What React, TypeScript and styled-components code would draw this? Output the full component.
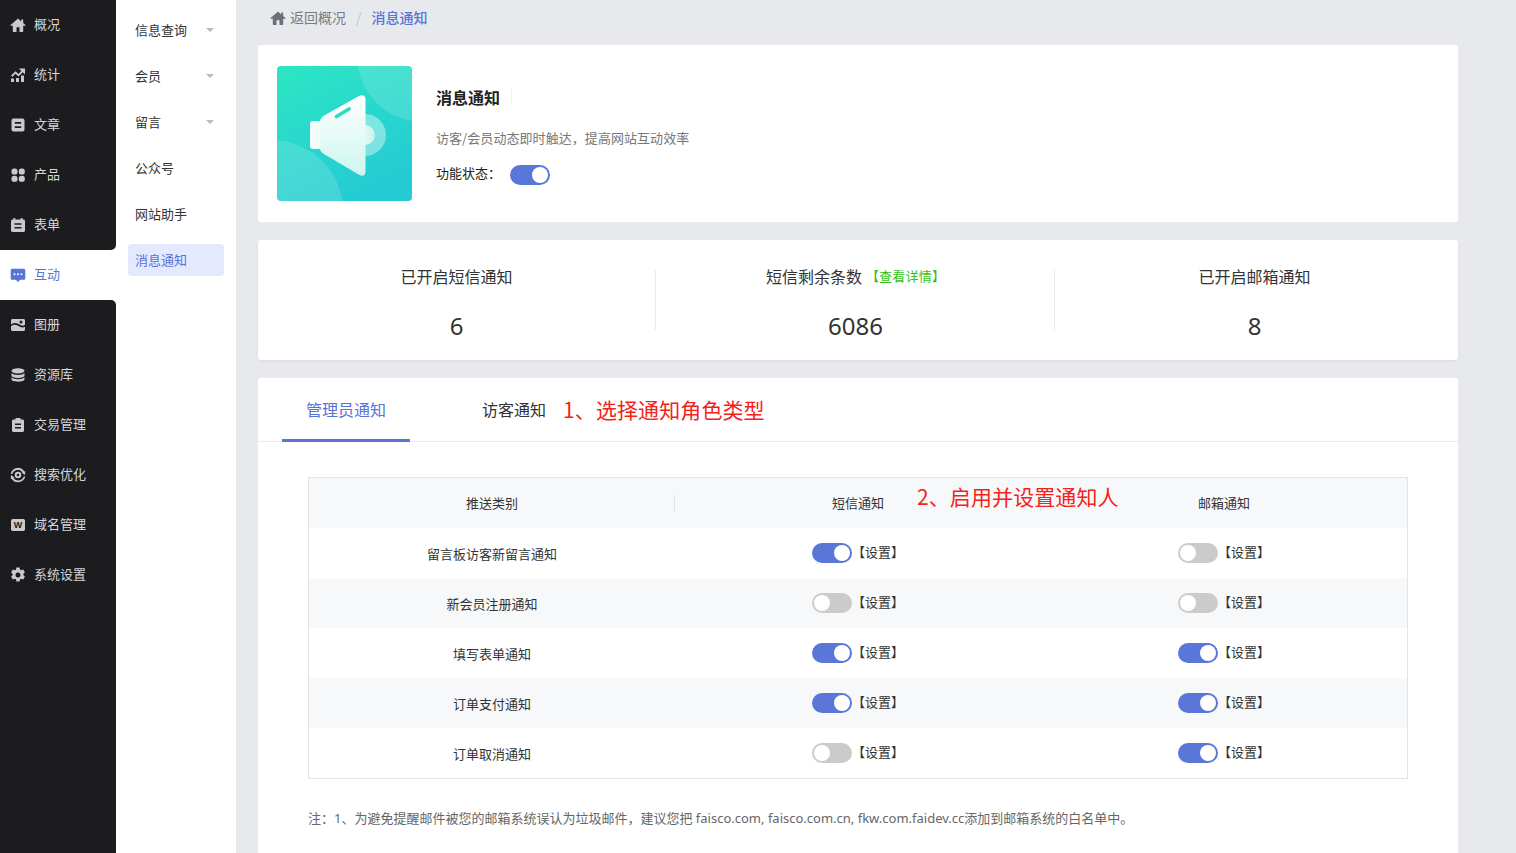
import React from "react";
import styled, { createGlobalStyle } from "styled-components";

const Global = createGlobalStyle`
  html, body { margin: 0; padding: 0; height: 100%; overflow: hidden; }
  body { font-family: "Noto Sans CJK SC", "Noto Sans", sans-serif; font-size: 13px; color: #333; }
  * { box-sizing: border-box; }
`;

const Page = styled.div`
  display: flex;
  width: 1516px;
  height: 853px;
  overflow: hidden;
  background: #e8e9ed;
`;
const Rail = styled.nav`
  width: 116px;
  flex: none;
  height: 100%;
  display: flex;
  flex-direction: column;
  background: #fff;
`;
const RailGroup = styled.div<{ $bottom?: boolean }>`
  background: #1c1c1f;
  flex: ${(p) => (p.$bottom ? 1 : "none")};
  border-radius: ${(p) => (p.$bottom ? "0 5px 0 0" : "0 0 5px 0")};
`;
const RailItem = styled.a<{ $active?: boolean }>`
  display: flex;
  align-items: center;
  gap: 8px;
  height: 50px;
  padding-left: 10px;
  font-size: 13px;
  color: ${(p) => (p.$active ? "#5874d8" : "#d6d6db")};
  svg { width: 16px; height: 16px; flex: none; fill: ${(p) => (p.$active ? "#5874d8" : "#c9c9d0")}; }
`;
const RailLabel = styled.span`
  padding-bottom: 3px;
`;
const SubNav = styled.aside`
  width: 120px;
  flex: none;
  height: 100%;
  background: #fff;
  padding: 14px 12px 0;
  display: flex;
  flex-direction: column;
  gap: 14px;
`;
const SubItem = styled.a<{ $active?: boolean }>`
  display: flex;
  align-items: center;
  justify-content: space-between;
  height: 32px;
  padding: 0 10px 2px 7px;
  border-radius: 4px;
  font-size: 13px;
  color: ${(p) => (p.$active ? "#5874d8" : "#333")};
  background: ${(p) => (p.$active ? "#e4e9fd" : "transparent")};
`;
const Caret = styled.i`
  width: 0;
  height: 0;
  border-left: 4px solid transparent;
  border-right: 4px solid transparent;
  border-top: 4px solid #b9bcc6;
  margin-top: 2px;
`;
const Main = styled.main`
  flex: none;
  width: 1222px;
  padding: 0 0 0 22px;
  display: flex;
  flex-direction: column;
  gap: 18px;
`;
const Crumbs = styled.div`
  height: 27px;
  margin-top: 4px;
  margin-bottom: -4px;
  padding: 0 0 2px 12px;
  display: flex;
  align-items: center;
  font-size: 14px;
  color: #777b84;
  svg { width: 16px; height: 16px; fill: #6b7079; margin-right: 4px; margin-top: 3px; }
`;
const CrumbSep = styled.span`
  margin: 0 10px;
  color: #c4c7cf;
`;
const CrumbNow = styled.span`
  color: #5874d8;
  font-weight: 500;
`;
const Card = styled.section`
  width: 1200px;
  background: #fff;
  border-radius: 3px;
`;
const Hero = styled(Card)`
  height: 177px;
  padding: 21px 19px;
  display: flex;
  gap: 24px;
`;
const HeroArt = styled.svg`
  width: 135px;
  height: 135px;
  flex: none;
  border-radius: 4px;
`;
const HeroBody = styled.div`
  display: flex;
  flex-direction: column;
  padding-top: 19px;
`;
const HeroTitle = styled.h1`
  margin: 0;
  height: 24px;
  line-height: 24px;
  font-size: 16px;
  font-weight: 700;
  color: #222;
  display: flex;
  align-items: center;
  &::after { content: ""; width: 1px; height: 16px; margin-left: 11px; background: #f4eeee; }
`;
const HeroDesc = styled.p`
  margin: 19px 0 0;
  line-height: 20px;
  font-size: 13px;
  letter-spacing: 0.06px;
  color: #777;
`;
const StatusRow = styled.div`
  display: flex;
  align-items: flex-start;
  margin-top: 17px;
  font-size: 13px;
  color: #222;
  gap: 9px;
`;
const StatusLabel = styled.span`
  line-height: 16px;
`;
const ToggleBox = styled.span<{ $on?: boolean }>`
  display: block;
  position: relative;
  width: 40px;
  height: 20px;
  flex: none;
  border-radius: 10px;
  background: ${(p) => (p.$on ? "#5a76d8" : "#cbcbcb")};
  &::after {
    content: "";
    position: absolute;
    top: 2px;
    left: ${(p) => (p.$on ? "22px" : "2px")};
    width: 16px;
    height: 16px;
    border-radius: 50%;
    background: #fff;
  }
`;
const Stats = styled(Card)`
  height: 120px;
  display: flex;
  box-shadow: 0 1px 3px rgba(0, 0, 0, 0.06);
  padding-top: 26px;
`;
const Stat = styled.div<{ $line?: boolean }>`
  width: 399px;
  height: 64px;
  margin-top: 4px;
  display: flex;
  flex-direction: column;
  align-items: center;
  position: relative;
  &:first-child { margin-left: -1px; }
  &::after {
    content: "";
    display: ${(p) => (p.$line ? "block" : "none")};
    position: absolute;
    right: 0;
    top: 0;
    width: 1px;
    height: 60px;
    background: #ececec;
  }
`;
const StatLabel = styled.div`
  margin-top: -6px;
  font-size: 16px;
  line-height: 24px;
  color: #333;
  display: flex;
  align-items: center;
`;
const Detail = styled.a`
  font-size: 13px;
  color: #36c215;
  margin-left: 4px;
  letter-spacing: 0.2px;
`;
const StatValue = styled.div`
  font-size: 24px;
  line-height: 32px;
  margin-top: 22px;
  color: #333;
  font-family: "Noto Sans", sans-serif;
`;
const Panel = styled(Card)`
  flex: 1;
  border-radius: 3px 3px 0 0;
  min-height: 475px;
`;
const Tabs = styled.div`
  height: 64px;
  display: flex;
  align-items: flex-start;
  padding-left: 24px;
  border-bottom: 1px solid #ececec;
`;
const Tab = styled.a<{ $active?: boolean }>`
  display: block;
  height: 64px;
  padding: 19px 24px 0;
  line-height: 24px;
  font-size: 16px;
  color: ${(p) => (p.$active ? "#5874d8" : "#333")};
  margin-right: ${(p) => (p.$active ? "48px" : "0")};
  border-bottom: 3px solid ${(p) => (p.$active ? "#5874d8" : "transparent")};
`;
const Annotation = styled.span`
  color: #f5221b;
  font-size: 21px;
  letter-spacing: 0.1px;
  line-height: 30px;
  white-space: nowrap;
`;
const TabNote = styled(Annotation)`
  margin: 16px 0 0 -7px;
`;
const TableWrap = styled.div`
  position: relative;
  margin: 35px 50px 0;
  border: 1px solid #e4e4e6;
`;
const TableNote = styled(Annotation)`
  position: absolute;
  left: 608px;
  top: 3px;
`;
const Row = styled.div<{ $shade?: boolean }>`
  display: grid;
  grid-template-columns: 366px 366px 1fr;
  height: 50px;
  align-items: center;
  text-align: center;
  font-size: 13px;
  background: ${(p) => (p.$shade ? "#f7f8fa" : "#fff")};
  color: #333;
`;
const HeadCell = styled.div<{ $line?: boolean }>`
  height: 50px;
  line-height: 50px;
  position: relative;
  &::after {
    content: "";
    display: ${(p) => (p.$line ? "block" : "none")};
    position: absolute;
    right: 0;
    top: 17px;
    width: 1px;
    height: 16px;
    background: #e0e1e5;
  }
`;
const RowLabel = styled.div`
  line-height: 52px;
  height: 50px;
`;
const SwitchCell = styled.div`
  display: flex;
  justify-content: center;
  align-items: center;
`;
const SetLink = styled.a`
  width: 52px;
  font-size: 13px;
  line-height: 18px;
  margin-top: -2px;
  color: #333;
`;
const Note = styled.p`
  margin: 29px 50px 0;
  font-size: 13px;
  line-height: 20px;
  color: #666;
  font-family: "Noto Sans", "Noto Sans CJK SC", sans-serif;
`;

const icons: Record<string, React.ReactNode> = {
  home: <path d="M8 1.500.6 8.100a.4.4 0 0 0 .3.7H2.800v5.400c0 .4.3.7.7.7h3V10.300h3V14.900h3c.4 0 .7-.3.7-.7V8.800h1.900a.4.4 0 0 0 .3-.7l-2.200-2V2.600h-2v1.800z" />,
  stats: (
    <>
      <path d="M9 1.500h6v6l-2.200-2.200-4.300 4.300-3-2.800-3.300 3.200L1.100 8.500l4.400-4.300 3 2.800 2.800-2.900z" />
      <rect x="1" y="11.500" width="3" height="3.500" rx=".5" />
      <rect x="6" y="11" width="3" height="4" rx=".5" />
      <rect x="11" y="8.500" width="3" height="6.500" rx=".5" />
    </>
  ),
  article: <path fillRule="evenodd" d="M3.500 1.500h9a2 2 0 0 1 2 2v9a2 2 0 0 1-2 2h-9a2 2 0 0 1-2-2v-9a2 2 0 0 1 2-2zM4.800 5v1.700h6.400V5zm0 4.300V11h6.400V9.300z" />,
  product: (
    <>
      <rect x="1.500" y="1.500" width="6" height="6" rx="2.600" />
      <rect x="8.800" y="1.500" width="6" height="6" rx="2.600" />
      <rect x="1.500" y="8.800" width="6" height="6" rx="2.600" />
      <rect x="8.800" y="8.800" width="6" height="6" rx="2.600" />
    </>
  ),
  form: <path fillRule="evenodd" d="M3.500 1h1.800v1.500h5.400V1h1.800v1.500h1c.8 0 1.500.7 1.500 1.500v9.500c0 .8-.7 1.500-1.500 1.500H2.500C1.700 15 1 14.300 1 13.500V4c0-.8.700-1.500 1.500-1.500h1zM4.500 6.200v1.500h7V6.200zm0 3.700v1.500h7V9.900z" />,
  chat: <path fillRule="evenodd" d="M2.300 1.800h11.400c.9 0 1.600.7 1.600 1.600v7.800c0 .9-.7 1.600-1.600 1.600h-3.500L8 15l-2.200-2.200H2.300c-.9 0-1.600-.7-1.600-1.600V3.400c0-.9.7-1.600 1.600-1.600zM4.500 6.300a1 1 0 1 0 0 2 1 1 0 0 0 0-2zm3.500 0a1 1 0 1 0 0 2 1 1 0 0 0 0-2zm3.500 0a1 1 0 1 0 0 2 1 1 0 0 0 0-2z" />,
  album: <path fillRule="evenodd" d="M2.500 2h11c.8 0 1.500.7 1.500 1.500v4.300c-1.200 1-2.400 1.200-4 .5-2.500-1.200-3.800-2.600-6.500-2.300-1.300.1-2.500.7-3.500 1.500V3.500C1 2.700 1.700 2 2.500 2zM11 3.500a1.500 1.500 0 1 0 0 3 1.500 1.500 0 0 0 0-3zM1 9.300c1-.9 2.300-1.500 3.500-1.500 2.300 0 3.800 1.500 6 2.300 1.700.6 3.200.4 4.500-.4v2.800c0 .8-.7 1.500-1.500 1.500h-11C1.700 14 1 13.300 1 12.500z" />,
  db: (
    <>
      <ellipse cx="8" cy="3.800" rx="6.500" ry="2.600" />
      <path d="M1.500 6c1 1.300 3.500 2 6.500 2s5.500-.7 6.500-2v2.500c0 1.400-2.900 2.500-6.500 2.500s-6.500-1.100-6.500-2.500z" />
      <path d="M1.500 10.300c1 1.300 3.500 2 6.500 2s5.500-.7 6.500-2v2c0 1.400-2.900 2.400-6.500 2.400s-6.500-1-6.500-2.400z" />
    </>
  ),
  trade: <path fillRule="evenodd" d="M5.500 1h5v1.500h2c.8 0 1.500.7 1.500 1.500v9.500c0 .8-.7 1.500-1.500 1.500h-9C2.700 15 2 14.300 2 13.500V4c0-.8.700-1.500 1.500-1.500h2zM5 6.500V8h6V6.500zm0 3.500v1.500h6V10z" />,
  seo: (
    <>
      <path fillRule="evenodd" d="M8 4.700a3.300 3.300 0 1 1 0 6.600 3.300 3.300 0 0 1 0-6.600zm0 2a1.300 1.300 0 1 0 0 2.600 1.300 1.300 0 0 0 0-2.600z" />
      <path d="M8 .8c2.700 0 5 1.500 6.300 3.700l1-.4-.4 4-3.300-2.300 1-.4A5.700 5.700 0 0 0 2.400 7L.6 6.800A7.500 7.500 0 0 1 8 .8zM15.400 9.200A7.500 7.500 0 0 1 8 15.200a7.400 7.400 0 0 1-6.300-3.500l-1 .4.400-4 3.300 2.300-1 .4a5.700 5.700 0 0 0 10.200-1z" />
    </>
  ),
  domain: (
    <>
      <rect x="1" y="2" width="14" height="12" rx="1.800" />
      <text x="8" y="11.200" textAnchor="middle" fontSize="9" fontWeight="700" fontFamily="Liberation Sans, sans-serif" fill="#1c1c1f">W</text>
    </>
  ),
  gear: <path fillRule="evenodd" d="M6.400.6h3.200l.5 2.200.9.500 2.200-.7 1.700 2.900-1.600 1.500v1l1.600 1.500-1.700 2.900-2.200-.7-.9.500-.5 2.200H6.400l-.5-2.200-.9-.5-2.200.7L1.100 9.500l1.600-1.500V7L1.100 5.500 2.800 2.600l2.200.7.900-.5zM8 5.500a2.500 2.500 0 1 0 0 5 2.500 2.500 0 0 0 0-5z" />,
};

const Icon = ({ name }: { name: string }) => <svg viewBox="0 0 16 16">{icons[name]}</svg>;

const topNav = [
  ["home", "概况"],
  ["stats", "统计"],
  ["article", "文章"],
  ["product", "产品"],
  ["form", "表单"],
];
const bottomNav = [
  ["album", "图册"],
  ["db", "资源库"],
  ["trade", "交易管理"],
  ["seo", "搜索优化"],
  ["domain", "域名管理"],
  ["gear", "系统设置"],
];
const subNav: [string, boolean][] = [
  ["信息查询", true],
  ["会员", true],
  ["留言", true],
  ["公众号", false],
  ["网站助手", false],
];
const rows: [string, boolean, boolean][] = [
  ["留言板访客新留言通知", true, false],
  ["新会员注册通知", false, false],
  ["填写表单通知", true, true],
  ["订单支付通知", true, true],
  ["订单取消通知", false, true],
];

const HeroIllustration = () => (
  <HeroArt viewBox="0 0 135 135">
    <defs>
      <linearGradient id="bg" x1="0" y1="0" x2="0.5" y2="1">
        <stop offset="0" stopColor="#2de6c3" />
        <stop offset="1" stopColor="#25cbd3" />
      </linearGradient>
      <linearGradient id="body" x1="0.5" y1="0" x2="0.5" y2="1">
        <stop offset="0" stopColor="#ffffff" />
        <stop offset="1" stopColor="#cdf6ee" />
      </linearGradient>
      <linearGradient id="inner" x1="0" y1="0.5" x2="1" y2="0.5">
        <stop offset="0" stopColor="#ffffff" />
        <stop offset="1" stopColor="#c5f3ec" />
      </linearGradient>
    </defs>
    <rect width="135" height="135" fill="url(#bg)" />
    <circle cx="146" cy="-10" r="66" fill="#fff" fillOpacity="0.14" />
    <circle cx="-5" cy="145" r="71" fill="#fff" fillOpacity="0.14" />
    <circle cx="88" cy="69" r="21" fill="#fff" fillOpacity="0.4" />
    <circle cx="88" cy="69" r="10" fill="url(#inner)" />
    <rect x="33" y="55" width="16" height="28" rx="3" fill="#f0fdfa" />
    <path d="M48 49 82 30c3-1.700 6.500-.5 6.500 3v73c0 3.500-3 4.500-6 3L47 88c-3-1.700-4-3.500-4-6V56c0-3 2-5.500 5-7z" fill="url(#body)" />
    <path d="M59.500 50.500 72 43" stroke="#2cdcc6" strokeWidth="3.600" strokeLinecap="round" fill="none" />
  </HeroArt>
);

export default function App() {
  return (
    <Page>
      <Global />
      <Rail>
        <RailGroup>
          {topNav.map(([i, t]) => (
            <RailItem key={t}><Icon name={i} /><RailLabel>{t}</RailLabel></RailItem>
          ))}
        </RailGroup>
        <RailItem $active><Icon name="chat" /><RailLabel>互动</RailLabel></RailItem>
        <RailGroup $bottom>
          {bottomNav.map(([i, t]) => (
            <RailItem key={t}><Icon name={i} /><RailLabel>{t}</RailLabel></RailItem>
          ))}
        </RailGroup>
      </Rail>
      <SubNav>
        {subNav.map(([t, caret]) => (
          <SubItem key={t}>{t}{caret && <Caret />}</SubItem>
        ))}
        <SubItem $active>消息通知</SubItem>
      </SubNav>
      <Main>
        <Crumbs>
          <Icon name="home" />返回概况<CrumbSep>/</CrumbSep><CrumbNow>消息通知</CrumbNow>
        </Crumbs>
        <Hero>
          <HeroIllustration />
          <HeroBody>
            <HeroTitle>消息通知</HeroTitle>
            <HeroDesc>访客/会员动态即时触达，提高网站互动效率</HeroDesc>
            <StatusRow><StatusLabel>功能状态：</StatusLabel><ToggleBox $on /></StatusRow>
          </HeroBody>
        </Hero>
        <Stats>
          <Stat $line>
            <StatLabel>已开启短信通知</StatLabel>
            <StatValue>6</StatValue>
          </Stat>
          <Stat $line>
            <StatLabel>短信剩余条数<Detail>【查看详情】</Detail></StatLabel>
            <StatValue>6086</StatValue>
          </Stat>
          <Stat>
            <StatLabel>已开启邮箱通知</StatLabel>
            <StatValue>8</StatValue>
          </Stat>
        </Stats>
        <Panel>
          <Tabs>
            <Tab $active>管理员通知</Tab>
            <Tab>访客通知</Tab>
            <TabNote>1、选择通知角色类型</TabNote>
          </Tabs>
          <TableWrap>
            <Row $shade>
              <HeadCell $line>推送类别</HeadCell>
              <HeadCell $line>短信通知</HeadCell>
              <HeadCell>邮箱通知</HeadCell>
            </Row>
            {rows.map(([label, sms, mail], i) => (
              <Row key={label} $shade={i % 2 === 1}>
                <RowLabel>{label}</RowLabel>
                <SwitchCell><ToggleBox $on={sms} /><SetLink>【设置】</SetLink></SwitchCell>
                <SwitchCell><ToggleBox $on={mail} /><SetLink>【设置】</SetLink></SwitchCell>
              </Row>
            ))}
            <TableNote>2、启用并设置通知人</TableNote>
          </TableWrap>
          <Note>注：1、为避免提醒邮件被您的邮箱系统误认为垃圾邮件，建议您把 faisco.com, faisco.com.cn, fkw.com.faidev.cc添加到邮箱系统的白名单中。</Note>
        </Panel>
      </Main>
    </Page>
  );
}
